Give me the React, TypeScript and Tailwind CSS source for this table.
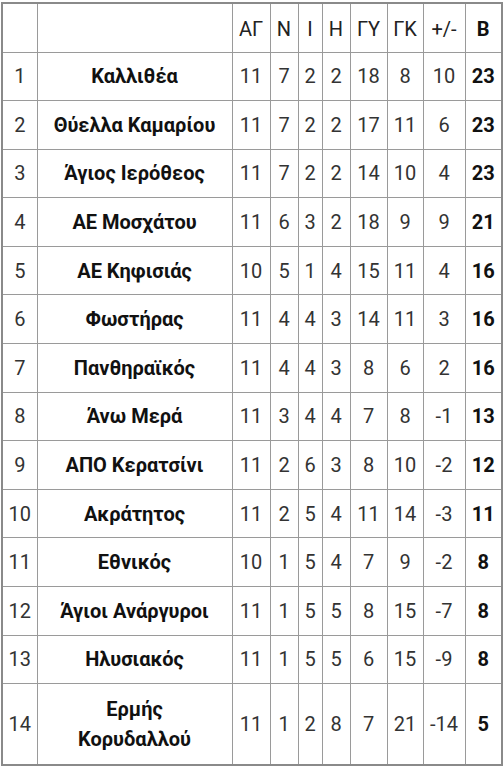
const headers = ["ΑΓ", "Ν", "Ι", "Η", "ΓΥ", "ΓΚ", "+/-", "B"];

const rows: [number, string, number, number, number, number, number, number, number, number][] = [
  [1, "Καλλιθέα", 11, 7, 2, 2, 18, 8, 10, 23],
  [2, "Θύελλα Καμαρίου", 11, 7, 2, 2, 17, 11, 6, 23],
  [3, "Άγιος Ιερόθεος", 11, 7, 2, 2, 14, 10, 4, 23],
  [4, "ΑΕ Μοσχάτου", 11, 6, 3, 2, 18, 9, 9, 21],
  [5, "ΑΕ Κηφισιάς", 10, 5, 1, 4, 15, 11, 4, 16],
  [6, "Φωστήρας", 11, 4, 4, 3, 14, 11, 3, 16],
  [7, "Πανθηραϊκός", 11, 4, 4, 3, 8, 6, 2, 16],
  [8, "Άνω Μερά", 11, 3, 4, 4, 7, 8, -1, 13],
  [9, "ΑΠΟ Κερατσίνι", 11, 2, 6, 3, 8, 10, -2, 12],
  [10, "Ακράτητος", 11, 2, 5, 4, 11, 14, -3, 11],
  [11, "Εθνικός", 10, 1, 5, 4, 7, 9, -2, 8],
  [12, "Άγιοι Ανάργυροι", 11, 1, 5, 5, 8, 15, -7, 8],
  [13, "Ηλυσιακός", 11, 1, 5, 5, 6, 15, -9, 8],
];

const cell = "border border-[#9a9a9a] text-center align-middle p-0";
const num = `${cell} text-[20px] text-[#333]`;
const bold = `${cell} text-[20px] font-bold text-[#111]`;

export default function App() {
  return (
    <div className="min-h-screen bg-white pt-[2px] pl-[1px] font-['Roboto',sans-serif]">
      <table className="w-[500px] table-fixed border-collapse border-2 border-[#8a8a8a]">
        <colgroup>
          <col className="w-[35px]" />
          <col className="w-[195px]" />
          <col className="w-[38px]" />
          <col className="w-[28px]" />
          <col className="w-[24px]" />
          <col className="w-[28px]" />
          <col className="w-[37px]" />
          <col className="w-[36px]" />
          <col className="w-[42px]" />
          <col className="w-[37px]" />
        </colgroup>
        <thead>
          <tr className="h-[49px]">
            <th className={cell} />
            <th className={cell} />
            {headers.map((h) => (
              <th
                key={h}
                className={`${cell} pt-[2px] text-[20px] ${
                  h === "B" ? "font-bold text-[#111]" : "font-normal text-[#222]"
                }`}
              >
                {h}
              </th>
            ))}
          </tr>
        </thead>
        <tbody>
          {rows.map((r) => (
            <tr key={r[0]} className="h-[48.6px]">
              <td className={num}>{r[0]}</td>
              <td className={bold}>{r[1]}</td>
              {r.slice(2, 9).map((v, i) => (
                <td key={i} className={num}>
                  {v}
                </td>
              ))}
              <td className={bold}>{r[9]}</td>
            </tr>
          ))}
          <tr className="h-[81px]">
            <td className={num}>14</td>
            <td className={`${bold} leading-[30px]`}>
              Ερμής
              <br />
              Κορυδαλλού
            </td>
            {[11, 1, 2, 8, 7, 21, -14].map((v, i) => (
              <td key={i} className={num}>
                {v}
              </td>
            ))}
            <td className={bold}>5</td>
          </tr>
        </tbody>
      </table>
    </div>
  );
}
